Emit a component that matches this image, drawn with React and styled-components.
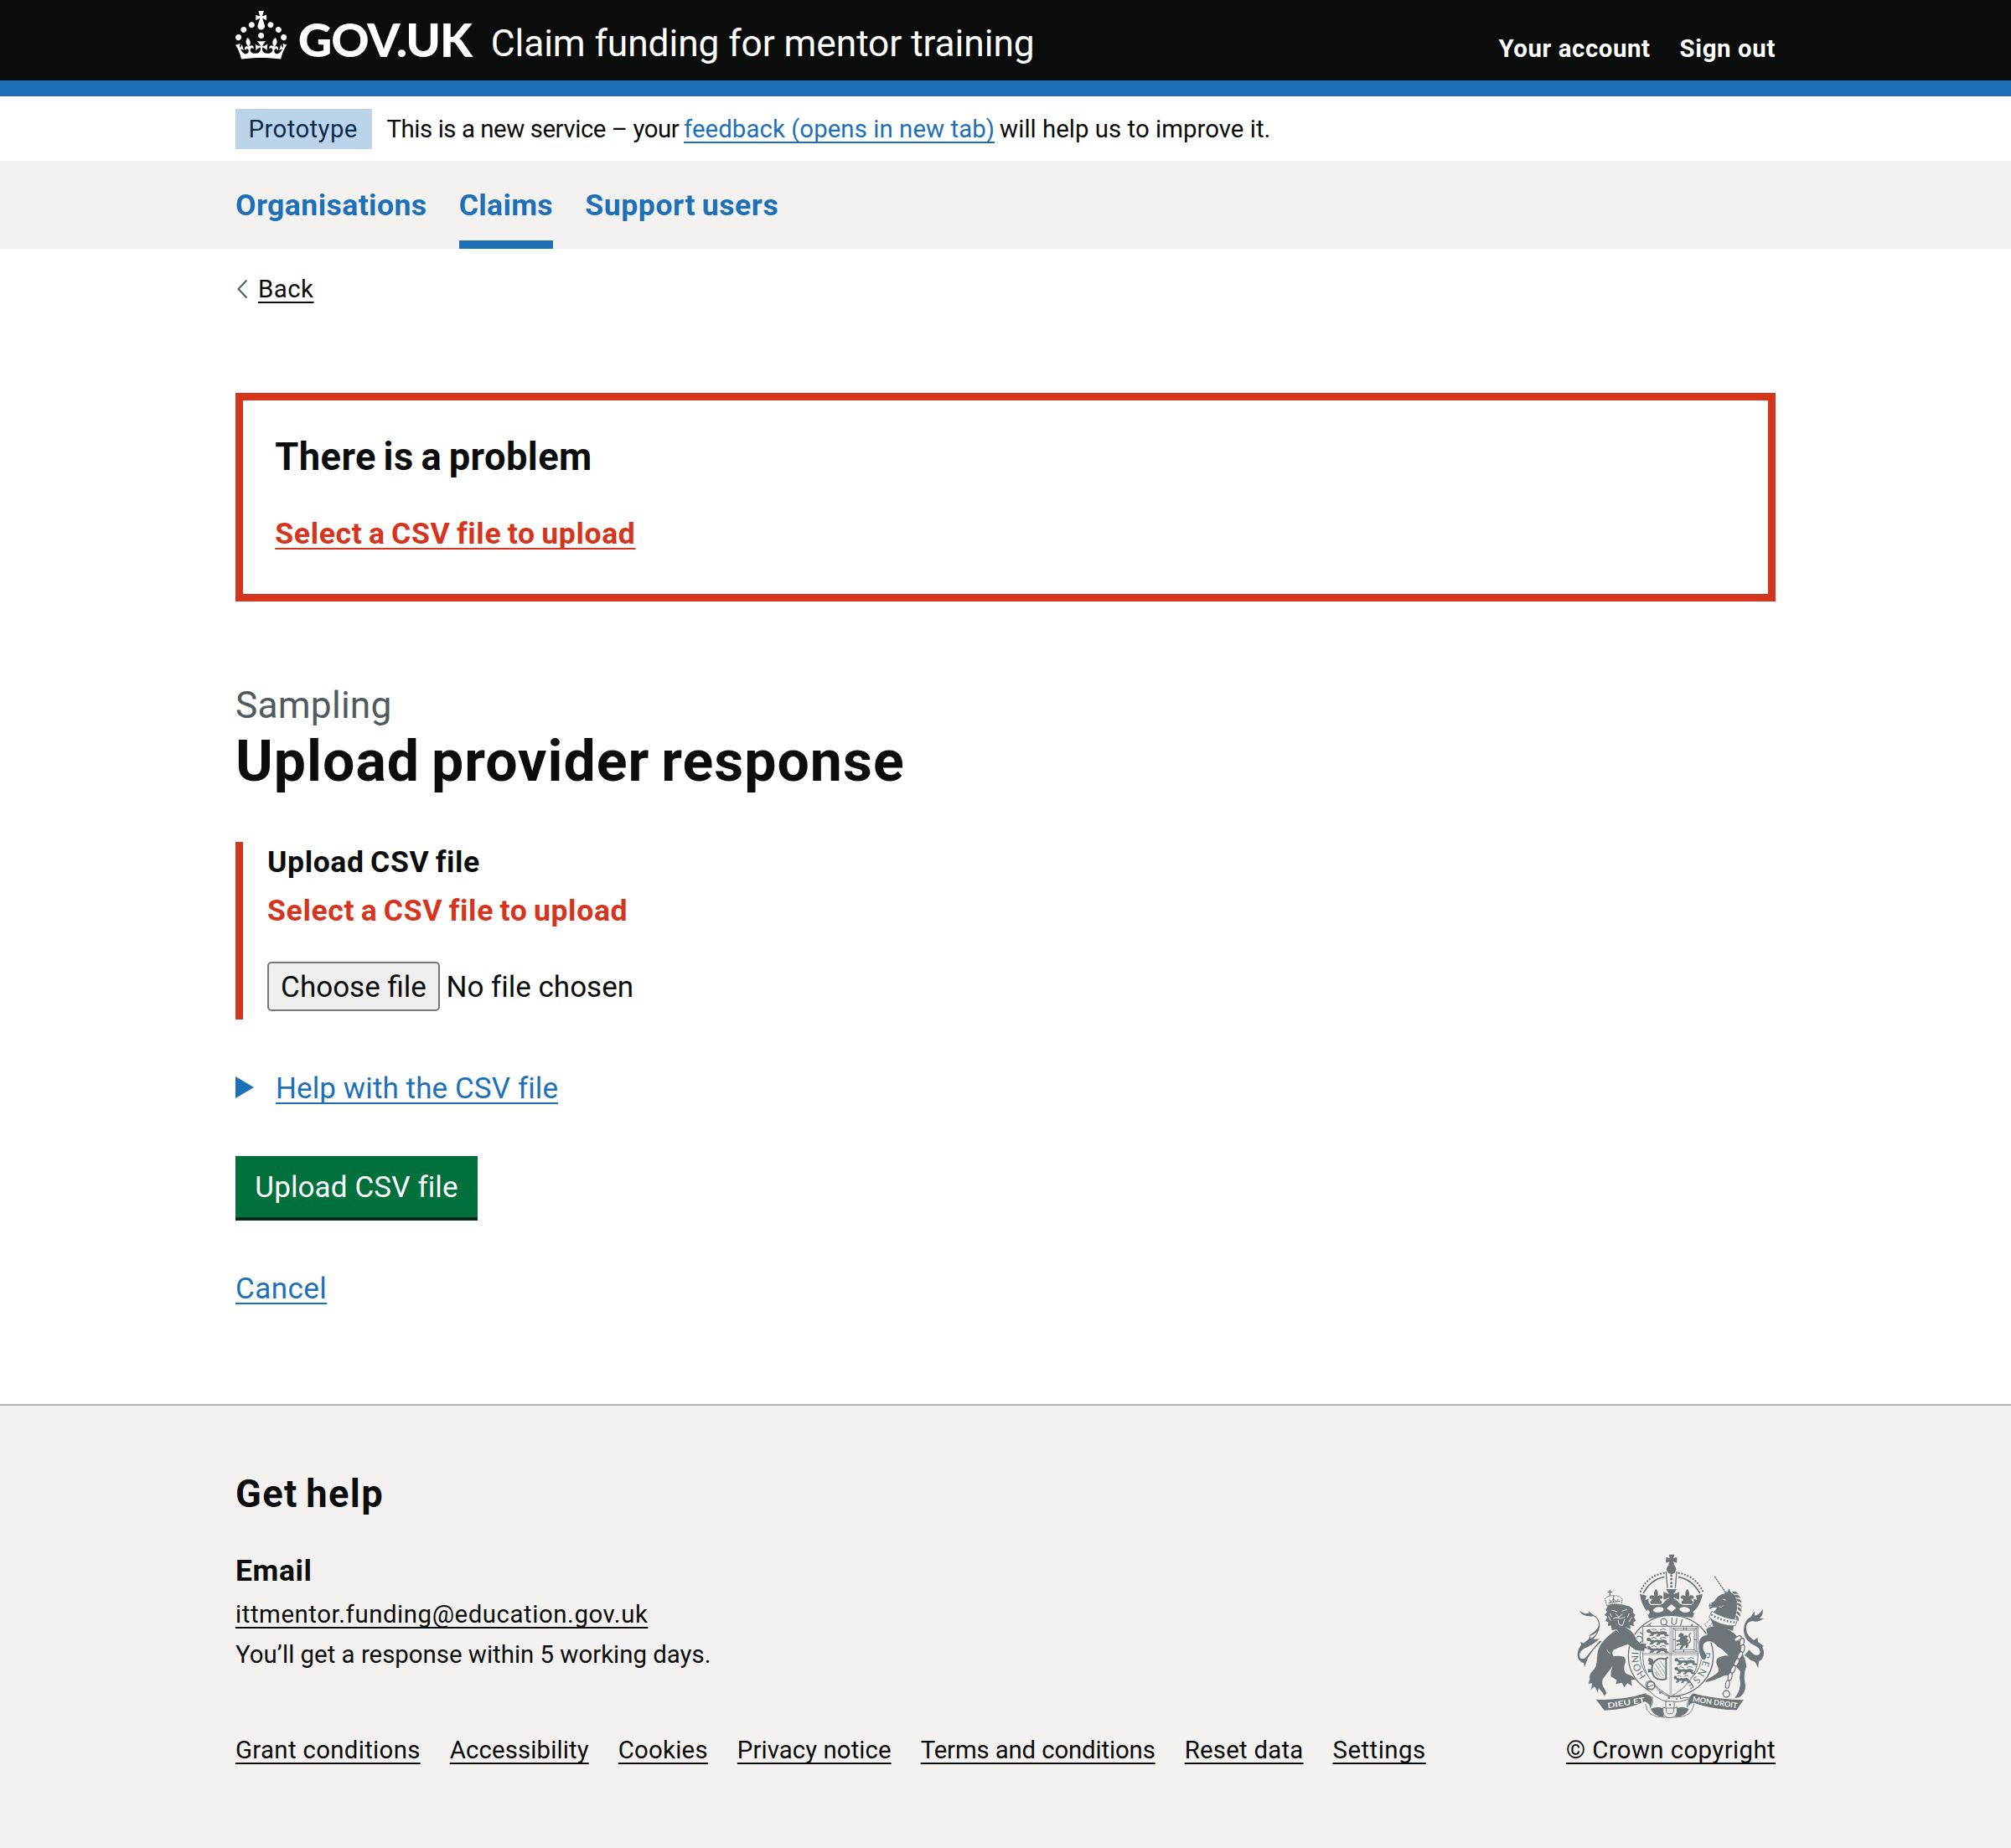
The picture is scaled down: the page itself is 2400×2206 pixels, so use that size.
import React from "react";
import styled, { createGlobalStyle, css } from "styled-components";

const ink = "#0b0c0c";
const blue = "#1d70b8";
const red = "#d4351c";
const grey = "#f3f2f1";
const crestInk = "#6d7579";

const GlobalStyle = createGlobalStyle`
  *, *::before, *::after { box-sizing: border-box; }
  body {
    margin: 0;
    background: #fff;
    color: ${ink};
    font-family: Roboto, "Liberation Sans", sans-serif;
    font-variant-ligatures: none;
    -webkit-font-smoothing: antialiased;
  }
  h1, h2, h3, p, ul { margin: 0; padding: 0; font-weight: 400; }
  ul { list-style: none; }
`;

const size16 = css`font-size: 29.4px; line-height: 38.3px;`;
const size19 = css`font-size: 35px; line-height: 48px;`;
const size24 = css`font-size: 44.3px; line-height: 57.4px;`;
const bold19 = css`
  font-size: 35.6px;
  line-height: 48px;
  font-weight: 700;
  word-spacing: -2px;
`;

const spacing = css`letter-spacing: ${(p) => p.$ls || 0}px; white-space: nowrap;`;

const underline = css`
  text-decoration: underline;
  text-decoration-thickness: 2px;
  text-underline-offset: 5px;
  text-decoration-skip-ink: none;
`;

const Page = styled.div`
  display: flex;
  flex-direction: column;
  min-height: 2206px;
`;

const Width = styled.div`
  width: 1838px;
  margin: 0 auto;
`;

const Header = styled.header`
  height: 115px;
  background: ${ink};
  border-bottom: 19px solid ${blue};
`;

const HeaderRow = styled(Width)`
  display: flex;
  align-items: flex-start;
  color: #fff;
`;

const CrownSvg = styled.svg`
  width: 61.3px;
  height: 57.5px;
  margin-top: 13px;
  fill: #fff;
`;

const LogoText = styled.span`
  margin: 18.6px 0 0 13.4px;
  width: 210.5px;
  font: 900 56px/56px Lato, "Liberation Sans", sans-serif;
  ${spacing}
`;

const ServiceName = styled.span`
  ${size24}
  ${spacing}
  margin: 24px auto 0 19.5px;
`;

const AccountNav = styled.nav`
  display: flex;
  gap: 35px;
  margin-top: 39.1px;
`;

const AccountLink = styled.a`
  ${size16}
  ${spacing}
  font-weight: 700;
  color: #fff;
`;

const PhaseBanner = styled(Width)`
  display: flex;
  align-items: flex-start;
  height: 77px;
  padding-top: 15px;
`;

const Tag = styled.strong`
  ${size16}
  ${spacing}
  width: 163px;
  height: 48px;
  margin-right: 17.5px;
  padding: 5px 0 0 15.5px;
  font-weight: 400;
  background: #bbd4ea;
  color: #0c2d4a;
`;

const PhaseText = styled.p`
  ${size16}
  display: flex;
  margin-top: 5px;
`;

const Run = styled.span`
  ${spacing}
  width: ${(p) => p.$w}px;
  white-space: pre;
`;

const PhaseLink = styled.a`
  ${underline}
  ${spacing}
  color: ${blue};
  margin-right: 6px;
`;

const PrimaryNav = styled.nav`
  height: 105px;
  background: ${grey};
`;

const NavList = styled(Width).attrs({ as: "ul" })`
  display: flex;
  gap: 38.3px;
`;

const NavItem = styled.li`
  height: 105px;
  padding-top: 28.5px;
  border-bottom: ${(p) => (p.$current ? `10px solid ${blue}` : "0")};
`;

const NavLink = styled.a`
  ${bold19}
  ${spacing}
  color: ${blue};
`;

const Main = styled(Width).attrs({ as: "main" })`
  display: flex;
  flex-direction: column;
  align-items: flex-start;
`;

const BackLink = styled.a`
  display: flex;
  align-items: flex-start;
  margin-top: 28.9px;
`;

const Chevron = styled.svg`
  width: 15px;
  height: 24px;
  margin: 7px 12px 0 0;
  fill: none;
  stroke: #505a5f;
  stroke-width: 2;
`;

const TextLink = styled.span`
  ${size16}
  ${underline}
  ${spacing}
`;

const ErrorSummary = styled.section`
  display: flex;
  flex-direction: column;
  align-items: flex-start;
  gap: 38.8px;
  width: 100%;
  height: 248.7px;
  margin-top: 104.8px;
  padding: 38.7px 38.3px 0;
  border: 9.6px solid ${red};
`;

const HeadingM = styled.h2`
  ${spacing}
  font-size: 45.3px;
  line-height: 57.4px;
  font-weight: 700;
  word-spacing: -3px;
`;

const ErrorLink = styled.a`
  ${bold19}
  ${underline}
  ${spacing}
  color: ${red};
`;

const Caption = styled.span`
  ${size24}
  ${spacing}
  margin-top: 96.3px;
  color: #505a5f;
`;

const Title = styled.h1`
  ${spacing}
  font-size: 68px;
  line-height: 76.6px;
  font-weight: 700;
  word-spacing: -4px;
`;

const FormGroup = styled.div`
  display: flex;
  flex-direction: column;
  align-items: flex-start;
  height: 212.6px;
  margin-top: 56.9px;
  padding-left: 29px;
  border-left: 9.6px solid ${red};
`;

const Label = styled.label`
  ${bold19}
  ${spacing}
`;

const ErrorMessage = styled.p`
  ${bold19}
  ${spacing}
  margin-top: 9.7px;
  color: ${red};
`;

const FileInput = styled.div`
  display: flex;
  align-items: center;
  gap: 7.5px;
  margin-top: 37.5px;
`;

const ChooseButton = styled.button`
  ${size19}
  ${spacing}
  width: 206px;
  height: 59px;
  padding: 2px 0 0;
  font-family: inherit;
  color: ${ink};
  background: #efefef;
  border: 2px solid #767676;
  border-radius: 5px;
`;

const FileStatus = styled.span`
  ${size19}
  ${spacing}
  padding-top: 2px;
`;

const Details = styled.div`
  display: flex;
  align-items: center;
  gap: 26px;
  margin-top: 58.2px;
`;

const Triangle = styled.span`
  margin-bottom: 4px;
  border: solid transparent;
  border-width: 13px 0 13px 22px;
  border-left-color: ${blue};
`;

const BlueLink = styled.a`
  ${size19}
  ${underline}
  ${spacing}
  color: ${blue};
`;

const SubmitButton = styled.button`
  ${size19}
  ${spacing}
  width: 289px;
  height: 73px;
  margin: 56.1px 0 62.3px;
  padding: 3.6px 0 0;
  border: 0;
  font-family: inherit;
  color: #fff;
  background: #00703c;
  box-shadow: 0 4px 0 #002d18;
`;

const Footer = styled.footer`
  flex: 1;
  margin-top: 113.4px;
  padding-top: 76.6px;
  background: ${grey};
  border-top: 2px solid #b1b4b6;
`;

const FooterRow = styled(Width)`
  display: flex;
  justify-content: space-between;
  align-items: flex-end;
`;

const FooterInfo = styled.div`
  display: flex;
  flex-direction: column;
  align-items: flex-start;
`;

const HeadingS = styled.h3`
  ${bold19}
  ${spacing}
  margin: 38.4px 0 9px;
`;

const SmallText = styled.p`
  ${size16}
  ${spacing}
  margin-top: 9.4px;
`;

const FooterLinks = styled.ul`
  display: flex;
  gap: 35px;
  margin-top: 76.7px;
`;

const FooterLinkItem = styled.li`
  display: flex;
`;

const Licence = styled.div`
  display: flex;
  flex-direction: column;
  align-items: center;
  gap: 15.6px;
`;

const CrestSvg = styled.svg`
  width: 230px;
  height: 203.3px;
`;

function Crown() {
  return (
    <CrownSvg viewBox="0 0 32 30" aria-hidden="true">
      <path d="M22.6 10.4c-1 .4-2-.1-2.4-1-.4-.9.1-2 1-2.4.9-.4 2 .1 2.4 1s-.1 2-1 2.4m-5.9 6.7c-.9.4-2-.1-2.4-1-.4-.9.1-2 1-2.4.9-.4 2 .1 2.4 1s-.1 2-1 2.4m10.8-3.7c-1 .4-2-.1-2.4-1-.4-.9.1-2 1-2.4.9-.4 2 .1 2.4 1s0 2-1 2.4m3.3 4.8c-1 .4-2-.1-2.4-1-.4-.9.1-2 1-2.4.9-.4 2 .1 2.4 1s-.1 2-1 2.4M17 4.7l2.3 1.2V2.5l-2.3.7-.2-.2.9-3h-3.4l.9 3-.2.2c-.1.1-2.3-.7-2.3-.7v3.4L15 4.7c.1.1.1.2.2.2l-1.3 4c-.1.2-.1.4-.1.6 0 1.1.8 2 1.9 2.2h.7c1-.2 1.9-1.1 1.9-2.1 0-.2 0-.4-.1-.6l-1.3-4c-.1-.2 0-.2.1-.3m-7.6 5.7c.9.4 2-.1 2.4-1 .4-.9-.1-2-1-2.4-.9-.4-2 .1-2.4 1s0 2 1 2.4m-5 3c.9.4 2-.1 2.4-1 .4-.9-.1-2-1-2.4-.9-.4-2 .1-2.4 1s.1 2 1 2.4m-3.2 4.8c.9.4 2-.1 2.4-1 .4-.9-.1-2-1-2.4-.9-.4-2 .1-2.4 1s0 2 1 2.4m14.8 11c4.4 0 8.6.3 12.3.8 1.1-4.5 2.4-7 3.7-8.8l-2.5-.9c.2 1.3.3 1.9 0 2.7-.4-.4-.8-1.1-1.1-2.3l-1.2 4c.7-.5 1.3-.8 2-.9-1.1 2.5-2.6 3.1-3.5 3-1.1-.2-1.7-1.2-1.5-2.1.3-1.2 1.5-1.5 2.1-.1 1.1-2.3-.8-3-2-2.3 1.9-1.9 2.1-3.5.6-5.6-2.1 1.6-2.1 3.2-1.2 5.5-1.2-1.4-3.2-.6-2.5 1.6.9-1.4 2.1-.5 1.9.8-.2 1.1-1.7 2.1-3.5 1.9-2.7-.2-2.9-2.1-2.9-3.6.7-.1 1.9.5 2.9 1.9l.4-4.3c-1.1 1.1-2.1 1.4-3.2 1.4.4-1.2 2.1-3 2.1-3h-5.4s1.7 1.9 2.1 3c-1.1 0-2.1-.2-3.2-1.4l.4 4.3c1-1.4 2.2-2 2.9-1.9-.1 1.5-.2 3.4-2.9 3.6-1.9.2-3.4-.8-3.5-1.9-.2-1.3 1-2.2 1.9-.8.7-2.3-1.2-3-2.5-1.6.9-2.2.9-3.9-1.2-5.5-1.5 2-1.3 3.7.6 5.6-1.2-.7-3.1 0-2 2.3.6-1.4 1.8-1.1 2.1.1.2.9-.3 1.9-1.5 2.1-.9.2-2.4-.5-3.5-3 .6 0 1.2.3 2 .9l-1.2-4c-.3 1.1-.7 1.9-1.1 2.3-.3-.8-.2-1.4 0-2.7l-2.9.9C1.3 23 2.6 25.5 3.7 30c3.7-.5 7.9-.8 12.3-.8" />
    </CrownSvg>
  );
}

const Passant = ({ x, y, scale = 1 }) => (
  <g transform={`translate(${x} ${y}) scale(${scale} 1)`}>
    <path d="M2 3l6-5 7 2 3 6 12 2 10-2 8 2 12-3 12 3 4 4-3 4 9 4v4h-13l-5-7-12 1-4 6-11 1 1-5 5-2-3-3-10 1-5 6-13 2 1-5 6-2-6-6-9-1z" fill={crestInk} />
    <path d="M50 2q10-9 22-2M20 0q10-5 18 2" fill="none" stroke={crestInk} strokeWidth="3" />
  </g>
);

const Fleur = ({ x, y }) => (
  <path
    transform={`translate(${x} ${y})`}
    d="M0-28q-12 14-5 27q-13-9-19 2q1 10 10 6q0 8-8 11l4 8h36l4-8q-8-3-8-11q9 4 10-6q-6-11-19-2q7-13-5-27z"
    fill={crestInk}
  />
);

const maneLocks = [[600, 188, 0], [608, 200, 8], [614, 214, 16], [616, 229, 24], [617, 244, 34], [614, 259, 42], [610, 274, 50]];
const chainLinks = [[615, 352, 60], [630, 364, 10], [632, 388, 10], [623, 412, 25], [611, 437, 25], [598, 462, 22], [587, 488, 12], [578, 516, 10]];

function Crest() {
  return (
    <CrestSvg viewBox="30 40 690 610" aria-hidden="true" fill={crestInk} stroke="none">
      <defs>
        <path id="garterLeft" d="M287 486A115 112 0 0 1 290 337" />
        <path id="garterTop" d="M303 327A115 112 0 0 1 460 339" />
        <path id="garterRight" d="M490 402A115 112 0 0 1 424 516" />
      </defs>

      {/* royal crown */}
      <path d="M368 51h20l-4 13 13-4v21l-13-4 4 13h-22l4-13-12 4V60l13 4z" />
      <circle cx="377" cy="104" r="17" />
      <path d="M350 117Q290 128 266 184M404 117Q464 128 490 184" fill="none" stroke={crestInk} strokeWidth="7" strokeLinecap="round" strokeDasharray="0.1 11" />
      <path d="M352 131Q300 142 277 190M402 131Q454 142 479 190" fill="none" stroke={crestInk} strokeWidth="5" />
      <path d="M358 112l5 60M396 112l-5 60" fill="none" stroke={crestInk} strokeWidth="4" />
      <path d="M377 126v48" fill="none" stroke={crestInk} strokeWidth="9" strokeLinecap="round" strokeDasharray="0.1 13" />
      <path d="M264 192l24 6-4 16 12-5q-4 18 8 23h28q16-2 22-14q8-8 16-9h14q8 1 15 9q7 12 23 14h26q12-5 9-23l12 5-4-16 24-6q-6 34-27 58l-8 27Q377 266 297 280l-8-26Q268 226 264 192z" />
      <path d="M358 175h38l-11 18 20-8v28l-20-8 4 14h-24l4-14-20 8v-28l20 8z" />
      <Fleur x={322} y={202} />
      <Fleur x={434} y={202} />
      <path d="M377 229l17 14-17 14-17-14z" fill={grey} />
      <ellipse cx="331" cy="249" rx="19" ry="10" transform="rotate(-8 331 249)" fill={grey} />
      <ellipse cx="425" cy="249" rx="19" ry="10" transform="rotate(8 425 249)" fill={grey} />
      <path d="M292 247l8 11-6 10-6-11zM464 247l4 11-6 10-8-11z" fill={grey} />

      {/* garter */}
      <ellipse cx="375" cy="414" rx="152" ry="145" fill={grey} stroke={crestInk} strokeWidth="4" />
      <ellipse cx="375" cy="414" rx="110" ry="106" fill="none" stroke={crestInk} strokeWidth="3" />
      <g fontFamily="Lato, sans-serif" fontSize="35" fill={crestInk}>
        <text><textPath href="#garterLeft" textLength="158">HONI SOI</textPath></text>
        <text><textPath href="#garterTop" textLength="170">T QUI M</textPath></text>
        <text><textPath href="#garterRight" textLength="134">PENSE</textPath></text>
      </g>

      {/* shield */}
      <path d="M275 308h197v110q-2 88-97 142q-98-52-100-142z" fill={grey} stroke={crestInk} strokeWidth="3" />
      <path d="M377 308v248M275 410h197M372 308v248M275 405h197" fill="none" stroke={crestInk} strokeWidth="1.6" />
      <Passant x={286} y={320} />
      <Passant x={286} y={350} />
      <Passant x={286} y={380} />
      <Passant x={386} y={423} />
      <Passant x={386} y={455} scale={0.92} />
      <Passant x={384} y={487} scale={0.75} />
      <path d="M383 315h83v85h-83zM391 322h68v70h-68z" fill="none" stroke={crestInk} strokeWidth="2.5" />
      <path d="M382 313l10 10M468 313l-10 10M382 401l10-10M468 401l-10-10M421 312v10M430 322v-10M421 402v-10M382 356h10M468 356h-10" stroke={crestInk} strokeWidth="3" />
      <path d="M404 336l8-5 8 4 2 8 8-4 6 4-4 9 7 5-5 7 5 13-7 10-5-3 3-9-9 3-4 10-11 2 3-7 5-6-8-3-9 5-3-4 8-7 7 2-2-7-10 1-3-5 12-4 4-7-8-3z" />
      <path d="M434 372q16-8 10-22q-8-10 2-18" fill="none" stroke={crestInk} strokeWidth="4" />
      <path d="M312 442q12-22 34-18q14 4 18-6M310 445q-7 24 6 44q14 14 42 8V424" fill="none" stroke={crestInk} strokeWidth="6" />
      <path d="M297 420l13 6 6 14-10 8-12-5 4-6-5-6zM293 460l13 2v9l-12 3z" />
      <path d="M320 444l28 42M328 438l26 39M337 432l18 27M316 457l22 33M318 472l10 16" stroke={crestInk} strokeWidth="2" />

      {/* buckle and strap */}
      <path d="M300 504q-16 0-15 17q16 32 58 51q40 15 86 0q9-2 12-8q-20-4-31 4l-2-9q-32 7-55-6q-32-20-36-36q-5-13-17-13z" fill={grey} stroke={crestInk} strokeWidth="3" />
      <circle cx="304" cy="520" r="14" fill="none" stroke={crestInk} strokeWidth="5" />
      <path d="M288 528l30-12" stroke={crestInk} strokeWidth="3" />
      <circle cx="337" cy="546" r="4" />
      <circle cx="368" cy="564" r="4" />
      <circle cx="396" cy="569" r="3" />
      <path d="M303 604q20-10 44-2l3 31q-34 0-47-29zM440 604q-24-10-46-2l-3 31q36 0 49-29z" />
      <path d="M284 586q6 50 66 48h44q58 0 64-48" fill="none" stroke={crestInk} strokeWidth="2.5" />
      <path d="M357 577h30v24h-30z" fill={grey} stroke={crestInk} strokeWidth="3" />
      <circle cx="372" cy="589" r="4" />
      <path d="M347 597q-4 39 25 39t26-39l-12 6q2 19-14 19t-13-19z" fill={grey} stroke={crestInk} strokeWidth="3" />

      {/* lion */}
      <path d="M178 316l27-8q35 12 48 48l12 12 24 2-4 8 8 8-12 4 1 8-16-1-18-3-27-20q-14 4-22 8-22 7-29 12-7 10 0 19 5 29-9 47-17 20-29 38-6 17 5 31l9 18-9 12-8-14-12-14-2 18-13-24-13 11 3-23-13 2 5-18q-4-16 11-30 14-10 15-48 1-32 18-53 25-30 57-50z" stroke={grey} strokeWidth="2" />
      <path d="M162 418q24-7 46 0q9 11 2 27q-7 20 6 33q22 6 34 22l-17 0 3 22-16-11-12 15-8-16-22 5 4-14-22-14q-2-17 6-33z" />
      <path d="M128 362q-30 26-50 60l-12 32-3-15q-23-6-22-30 1-20 13-34l-2-12 10 6q8-7 18-14l6-13 2 10q18-10 24-24-20 16-32 14 34-20 36-36 2-26-18-34-38 4-50-19l20 10 15-2-3-8 17 14q24 10 24 41-4 26-24 47l23-2q-29 26-55 34-18 11-17 27 4 16 20 8 22-26 52-62z" />
      <path d="M150 232l-8 18 5 7-9 10 9 8-6 15 10 3-1 14 11-2 3 17 14-2 8 10 11-12 16 6 1-13 17 7-2-14 14 4-2-14 9-6-7-12 5-9-9-8 1-12-12-10q-40-15-78-5z" />
      <path d="M163 250l20 6M200 254l18-6M178 262l10 14 14-12M168 282q8-8 18-4t24-2M186 285l4 18 12 2 8-22M158 262l5 12M226 262l-6 14M152 272l8 16M235 276l-10 16" fill="none" stroke={grey} strokeWidth="3" />
      <path d="M146 234l-7-24q8-12 32-12t30 13l-3 20q-28-7-52 3z" fill={grey} stroke={crestInk} strokeWidth="3" strokeDasharray="6 2" />
      <path d="M152 225l42-7M155 212l5 10 10-12 9 10 9-10M170 197v24" fill="none" stroke={crestInk} strokeWidth="3" />
      <path d="M157 178v20M149 185h16" stroke={crestInk} strokeWidth="4" />
      <path d="M146 392q4 10 12 14M180 320l8 10" stroke={grey} strokeWidth="3" fill="none" />

      {/* unicorn */}
      <path d="M532 130l40 58" fill="none" stroke={crestInk} strokeWidth="4" strokeDasharray="7 2" />
      <path d="M511 237l3-10 16-8 12-16q14-12 28-13l-6-8 14 4 5-14 7 15q18 6 22 34 2 36-9 63-40 0-78-24 10-8 16-20l-16 1-10 6-3-7 12-4z" />
      <path d="M562 212l10 2M516 228l6 1M548 238q10 4 14-4" stroke={grey} strokeWidth="3" fill="none" />
      {maneLocks.map(([x, y, r]) => (
        <path key={y} d="M-6-2q14-8 24 8q-8-4-12-1q-8-1-12-7z" transform={`translate(${x} ${y}) rotate(${r})`} />
      ))}
      <path d="M496 302l20-20 12 10-22 22z" fill={grey} stroke={crestInk} strokeWidth="3" strokeDasharray="7 3" />
      <path d="M500 318q22-16 46-11 46 10 68 38 16 26 13 54 18 20 20 54-10 22-6 52 8 30-10 50l-10 9-20 3q20-24 22-52-6-24 0-45-28-26-45-60-16-18-37-29-18-24-39-16-14 6-9 27l12 22-7 16-13-4q-14-26-11-60 6-26 31-28z" stroke={grey} strokeWidth="3" />
      <path d="M516 274q40 28 84 30l-2 20-72-18z" />
      <path d="M522 254q45 28 92 30l-8 22q-56 2-94-30z" fill={grey} stroke={crestInk} strokeWidth="2.5" />
      <path d="M520 266q44 26 88 28" fill="none" stroke={crestInk} strokeWidth="7" strokeDasharray="5 7" />
      <path d="M590 414q-28-5-50 11-6 13 4 28 8 18-10 28l-30 18-5 10q42-10 66-24l28-2q14-20 12-43z" />
      <path d="M639 412l17-20q20 28 36 16 10-18-14-30-42-18-42-58 2-36 26-46l12-20 2 16q18-4 28-24 4 20-12 34l16 0q-22 16-40 9l-11 3q-12 6-12 22 0 28 28 44l12-10 2 16 20 14-4 4q10 20 1 38-6 12-14 12l-2 26-9-18-5-6q-18-4-21-12z" />
      {chainLinks.map(([x, y, r]) => (
        <ellipse key={y} cx={x} cy={y} rx="7" ry="14" transform={`rotate(${r} ${x} ${y})`} fill={grey} stroke={crestInk} strokeWidth="3.5" />
      ))}
      <circle cx="574" cy="550" r="12" fill={grey} stroke={crestInk} strokeWidth="4" />

      {/* motto ribbon */}
      <path d="M107 570q92 5 178-22l26 14q4 22-8 42-4-22-22-26-60 28-144 31z" />
      <path d="M635 572q-98-2-180-24l-17 16q-8 20-4 38 8-20 24-20 66 24 153 26z" />
      <path d="M284 550q26 4 26 20t-8 34M444 556q-12 18-6 46" fill="none" stroke={grey} strokeWidth="2" />
      <g fontFamily="Lato, sans-serif" fontSize="27" fontWeight="700" fill={grey}>
        <text x="150" y="602" textLength="134" lengthAdjust="spacingAndGlyphs" transform="rotate(-9 150 602)">DIEU ET</text>
        <text x="452" y="578" textLength="162" lengthAdjust="spacingAndGlyphs" transform="rotate(8.5 452 578)">MON DROIT</text>
      </g>
    </CrestSvg>
  );
}

const footerLinks = [
  ["Grant conditions", 0.32],
  ["Accessibility", 0.12],
  ["Cookies", 0.24],
  ["Privacy notice", 0.06],
  ["Terms and conditions", -0.15],
  ["Reset data", 0.23],
  ["Settings", 0.48],
];

export default function App() {
  return (
    <Page>
      <GlobalStyle />
      <Header>
        <HeaderRow>
          <Crown />
          <LogoText $ls={-1}>GOV.UK</LogoText>
          <ServiceName $ls={-0.08}>Claim funding for mentor training</ServiceName>
          <AccountNav>
            <AccountLink $ls={0.57}>Your account</AccountLink>
            <AccountLink $ls={0.63}>Sign out</AccountLink>
          </AccountNav>
        </HeaderRow>
      </Header>

      <PhaseBanner>
        <Tag $ls={0.4}>Prototype</Tag>
        <PhaseText>
          <Run $w={354.5} $ls={-0.44}>This is a new service – your </Run>
          <PhaseLink $ls={0.06}>feedback (opens in new tab)</PhaseLink>
          <Run $ls={0.02}>will help us to improve it.</Run>
        </PhaseText>
      </PhaseBanner>

      <PrimaryNav>
        <NavList>
          <NavItem><NavLink $ls={0.42}>Organisations</NavLink></NavItem>
          <NavItem $current><NavLink $ls={0.3}>Claims</NavLink></NavItem>
          <NavItem><NavLink $ls={0.6}>Support users</NavLink></NavItem>
        </NavList>
      </PrimaryNav>

      <Main>
        <BackLink>
          <Chevron viewBox="0 0 15 24"><path d="M13.5 1.5L3.5 12l10 10.5" /></Chevron>
          <TextLink $ls={0.48}>Back</TextLink>
        </BackLink>

        <ErrorSummary>
          <HeadingM $ls={0.42}>There is a problem</HeadingM>
          <ErrorLink $ls={0.64}>Select a CSV file to upload</ErrorLink>
        </ErrorSummary>

        <Caption $ls={0.2}>Sampling</Caption>
        <Title $ls={1}>Upload provider response</Title>

        <FormGroup>
          <Label $ls={0.6}>Upload CSV file</Label>
          <ErrorMessage $ls={0.64}>Select a CSV file to upload</ErrorMessage>
          <FileInput>
            <ChooseButton>Choose file</ChooseButton>
            <FileStatus>No file chosen</FileStatus>
          </FileInput>
        </FormGroup>

        <Details>
          <Triangle />
          <BlueLink $ls={0.1}>Help with the CSV file</BlueLink>
        </Details>

        <SubmitButton $ls={0.12}>Upload CSV file</SubmitButton>
        <BlueLink $ls={0.45}>Cancel</BlueLink>
      </Main>

      <Footer>
        <FooterRow>
          <FooterInfo>
            <HeadingM $ls={1.35}>Get help</HeadingM>
            <HeadingS $ls={0.55}>Email</HeadingS>
            <TextLink $ls={0.56}>ittmentor.funding@education.gov.uk</TextLink>
            <SmallText>You’ll get a response within 5 working days.</SmallText>
            <FooterLinks>
              {footerLinks.map(([label, ls]) => (
                <FooterLinkItem key={label}><TextLink $ls={ls}>{label}</TextLink></FooterLinkItem>
              ))}
            </FooterLinks>
          </FooterInfo>
          <Licence>
            <Crest />
            <TextLink $ls={0.39}>© Crown copyright</TextLink>
          </Licence>
        </FooterRow>
      </Footer>
    </Page>
  );
}
